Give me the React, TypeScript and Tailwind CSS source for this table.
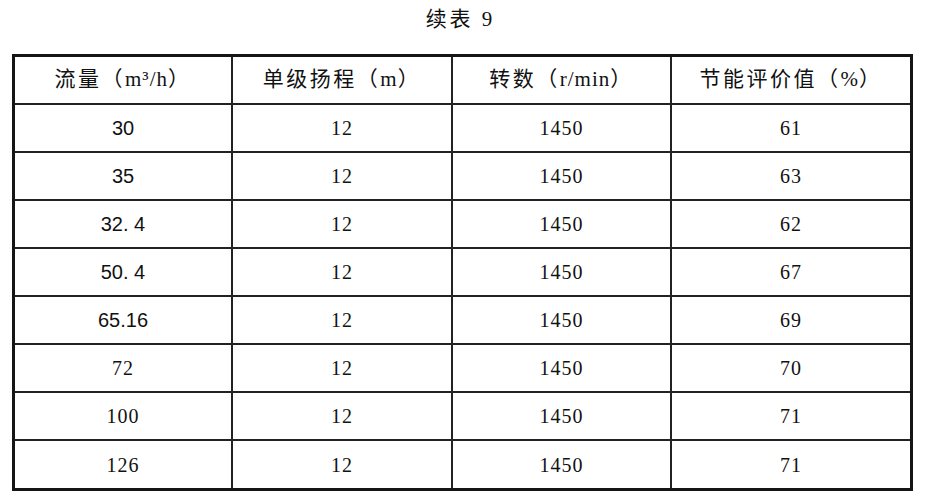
const headers: [string, string][] = [
  ["流量", "m³/h"],
  ["单级扬程", "m"],
  ["转数", "r/min"],
  ["节能评价值", "%"],
];

// flow rate, head, speed, rating; sans = first column printed in sans digits
const rows: { flow: string; sans: boolean; rating: string }[] = [
  { flow: "30", sans: true, rating: "61" },
  { flow: "35", sans: true, rating: "63" },
  { flow: "32. 4", sans: true, rating: "62" },
  { flow: "50. 4", sans: true, rating: "67" },
  { flow: "65.16", sans: true, rating: "69" },
  { flow: "72", sans: false, rating: "70" },
  { flow: "100", sans: false, rating: "71" },
  { flow: "126", sans: false, rating: "71" },
];

const serif = "font-['Liberation_Serif','Noto_Sans_CJK_SC',serif]";
const sans = "font-['Liberation_Sans','Noto_Sans_CJK_SC',sans-serif]";
const cell = "flex items-center justify-center border-[#222]";
const num = `${serif} text-[20px] tracking-[1px]`;

export default function App() {
  return (
    <div className="h-[504px] w-[929px] bg-white text-[#111]">
      <div className="ml-[12px] w-[901px] pt-[6px] pr-[4px] text-center">
        <span className={`${serif} text-[21px] leading-[26px] tracking-[3px]`}>续表 9</span>
      </div>

      <div className="ml-[12px] mt-[22px] w-[901px] border-[3px] border-[#151515]">
        <div className="grid grid-cols-[218px_220px_219px_1fr]">
          {headers.map(([zh, unit], i) => (
            <div
              key={zh}
              className={`${cell} ${serif} h-[48px] border-b-2 text-[21px] tracking-[2.5px] ${i < 3 ? "border-r-2" : ""}`}
            >
              <span>
                {zh}（<span className="tracking-[1px]">{unit}</span>）
              </span>
            </div>
          ))}
          {rows.map((r, ri) => {
            const last = ri === rows.length - 1;
            const b = last ? "h-[47px]" : "h-[48px] border-b-2";
            return [
              <div
                key={`f${ri}`}
                className={`${cell} ${b} border-r-2 ${r.sans ? `${sans} text-[20px]` : num}`}
              >
                {r.flow}
              </div>,
              <div key={`h${ri}`} className={`${cell} ${b} border-r-2 ${num}`}>
                12
              </div>,
              <div key={`s${ri}`} className={`${cell} ${b} border-r-2 ${num}`}>
                1450
              </div>,
              <div key={`r${ri}`} className={`${cell} ${b} ${num}`}>
                {r.rating}
              </div>,
            ];
          })}
        </div>
      </div>
    </div>
  );
}
